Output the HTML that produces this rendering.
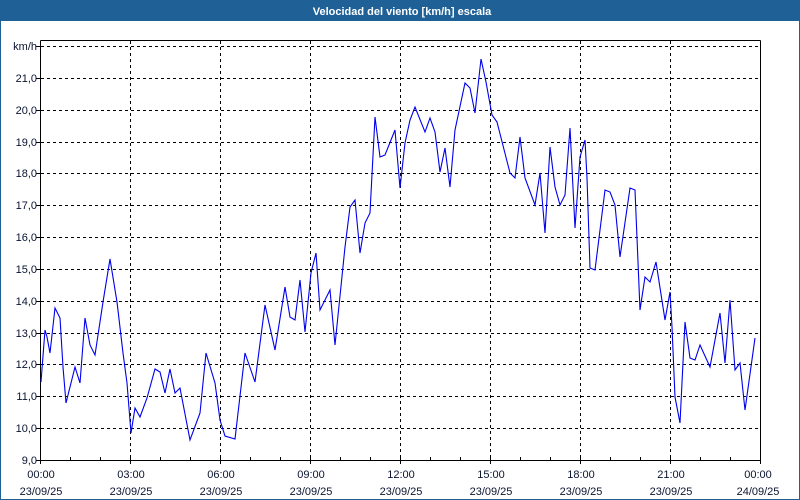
<!DOCTYPE html>
<html><head><meta charset="utf-8"><style>
html,body{margin:0;padding:0;width:800px;height:500px;overflow:hidden;background:#fff}
svg{display:block}
text{font-family:"Liberation Sans",sans-serif;font-size:11px;fill:#0a1430}
</style></head><body>
<svg width="800" height="500" viewBox="0 0 800 500" xmlns="http://www.w3.org/2000/svg">
<rect x="0" y="0" width="800" height="500" fill="#fff"/>
<rect x="0" y="0" width="800" height="21" fill="#1f6196"/>
<rect x="0" y="0" width="1" height="500" fill="#1f6196"/>
<rect x="799" y="0" width="1" height="500" fill="#1f6196"/>
<rect x="0" y="499" width="800" height="1" fill="#1f6196"/>
<text x="402" y="15" text-anchor="middle" style="fill:#fff;font-weight:bold">Velocidad del viento [km/h] escala</text>
<g stroke="#000" stroke-width="1" stroke-dasharray="3,3" shape-rendering="crispEdges">
<line x1="41" y1="46.5" x2="760" y2="46.5"/>
<line x1="41" y1="78.5" x2="760" y2="78.5"/>
<line x1="41" y1="110.5" x2="760" y2="110.5"/>
<line x1="41" y1="142.5" x2="760" y2="142.5"/>
<line x1="41" y1="173.5" x2="760" y2="173.5"/>
<line x1="41" y1="205.5" x2="760" y2="205.5"/>
<line x1="41" y1="237.5" x2="760" y2="237.5"/>
<line x1="41" y1="269.5" x2="760" y2="269.5"/>
<line x1="41" y1="301.5" x2="760" y2="301.5"/>
<line x1="41" y1="333.5" x2="760" y2="333.5"/>
<line x1="41" y1="364.5" x2="760" y2="364.5"/>
<line x1="41" y1="396.5" x2="760" y2="396.5"/>
<line x1="41" y1="428.5" x2="760" y2="428.5"/>
<line x1="130.5" y1="41" x2="130.5" y2="460"/>
<line x1="220.5" y1="41" x2="220.5" y2="460"/>
<line x1="310.5" y1="41" x2="310.5" y2="460"/>
<line x1="400.5" y1="41" x2="400.5" y2="460"/>
<line x1="490.5" y1="41" x2="490.5" y2="460"/>
<line x1="580.5" y1="41" x2="580.5" y2="460"/>
<line x1="670.5" y1="41" x2="670.5" y2="460"/>
</g>
<g stroke="#000" stroke-width="1" shape-rendering="crispEdges">
<line x1="40.5" y1="40.5" x2="760.5" y2="40.5"/>
<line x1="40.5" y1="40.5" x2="40.5" y2="460.5"/>
<line x1="760.5" y1="40.5" x2="760.5" y2="460.5"/>
<line x1="40.5" y1="460.5" x2="760.5" y2="460.5"/>
<line x1="36" y1="46.5" x2="40" y2="46.5"/>
<line x1="36" y1="78.5" x2="40" y2="78.5"/>
<line x1="36" y1="110.5" x2="40" y2="110.5"/>
<line x1="36" y1="142.5" x2="40" y2="142.5"/>
<line x1="36" y1="173.5" x2="40" y2="173.5"/>
<line x1="36" y1="205.5" x2="40" y2="205.5"/>
<line x1="36" y1="237.5" x2="40" y2="237.5"/>
<line x1="36" y1="269.5" x2="40" y2="269.5"/>
<line x1="36" y1="301.5" x2="40" y2="301.5"/>
<line x1="36" y1="333.5" x2="40" y2="333.5"/>
<line x1="36" y1="364.5" x2="40" y2="364.5"/>
<line x1="36" y1="396.5" x2="40" y2="396.5"/>
<line x1="36" y1="428.5" x2="40" y2="428.5"/>
<line x1="36" y1="460.5" x2="40" y2="460.5"/>
<path d="M70.5 457v3M100.5 457v3M130.5 457v7M160.5 457v3M190.5 457v3M220.5 457v7M250.5 457v3M280.5 457v3M310.5 457v7M340.5 457v3M370.5 457v3M400.5 457v7M430.5 457v3M460.5 457v3M490.5 457v7M520.5 457v3M550.5 457v3M580.5 457v7M610.5 457v3M640.5 457v3M670.5 457v7M700.5 457v3M730.5 457v3M40.5 460v4M760.5 460v4"/>
</g>
<g text-anchor="end">
<text x="37" y="50">km/h</text>
<text x="37" y="82">21,0</text>
<text x="37" y="114">20,0</text>
<text x="37" y="146">19,0</text>
<text x="37" y="177">18,0</text>
<text x="37" y="209">17,0</text>
<text x="37" y="241">16,0</text>
<text x="37" y="273">15,0</text>
<text x="37" y="305">14,0</text>
<text x="37" y="337">13,0</text>
<text x="37" y="368">12,0</text>
<text x="37" y="400">11,0</text>
<text x="37" y="432">10,0</text>
<text x="37" y="464">9,0</text>
</g>
<g text-anchor="middle">
<text x="41" y="478">00:00</text><text x="41" y="495">23/09/25</text>
<text x="131" y="478">03:00</text><text x="131" y="495">23/09/25</text>
<text x="221" y="478">06:00</text><text x="221" y="495">23/09/25</text>
<text x="311" y="478">09:00</text><text x="311" y="495">23/09/25</text>
<text x="401" y="478">12:00</text><text x="401" y="495">23/09/25</text>
<text x="491" y="478">15:00</text><text x="491" y="495">23/09/25</text>
<text x="581" y="478">18:00</text><text x="581" y="495">23/09/25</text>
<text x="671" y="478">21:00</text><text x="671" y="495">23/09/25</text>
<text x="758" y="478">00:00</text><text x="758" y="495">24/09/25</text>
</g>
<polyline fill="none" stroke="#0000ee" stroke-width="1.1" points="
41,382 45,330 47,337 50,353 55,308 60,318 63,367 66,403 75,367 80,383 85,318 90,345 95,355 103,302 110,259 117,302 123,353 127,383 131,433 135,408 140,417 147,398 155,369 160,372 165,393 170,369 175,393 180,388 190,440 200,413 206,353 215,383 220,420 225,436 235,439 245,353 255,382 265,305 275,350 285,287 290,317 295,320 300,280 305,332 311,273 316,253 320,310 330,290 335,345 345,247 350,207 355,200 360,253 365,223 370,213 375,117 380,157 385,155 395,130 400,188 405,143 410,120 415,107 425,132 430,118 435,132 440,172 445,148 450,187 455,130 465,83 470,88 475,113 481,59 486,82 492,115 497,122 510,173 515,178 520,137 525,178 535,205 540,173 545,233 550,147 555,187 560,205 565,195 570,128 575,228 580,157 585,140 587,178 590,268 595,270 605,190 610,192 615,205 620,257 630,188 635,190 640,310 645,277 650,282 656,262 665,320 670,292 672,327 675,397 680,423 685,322 690,358 695,360 700,345 710,367 720,313 725,363 730,300 735,370 740,363 745,410 755,338"/>
</svg>
</body></html>
